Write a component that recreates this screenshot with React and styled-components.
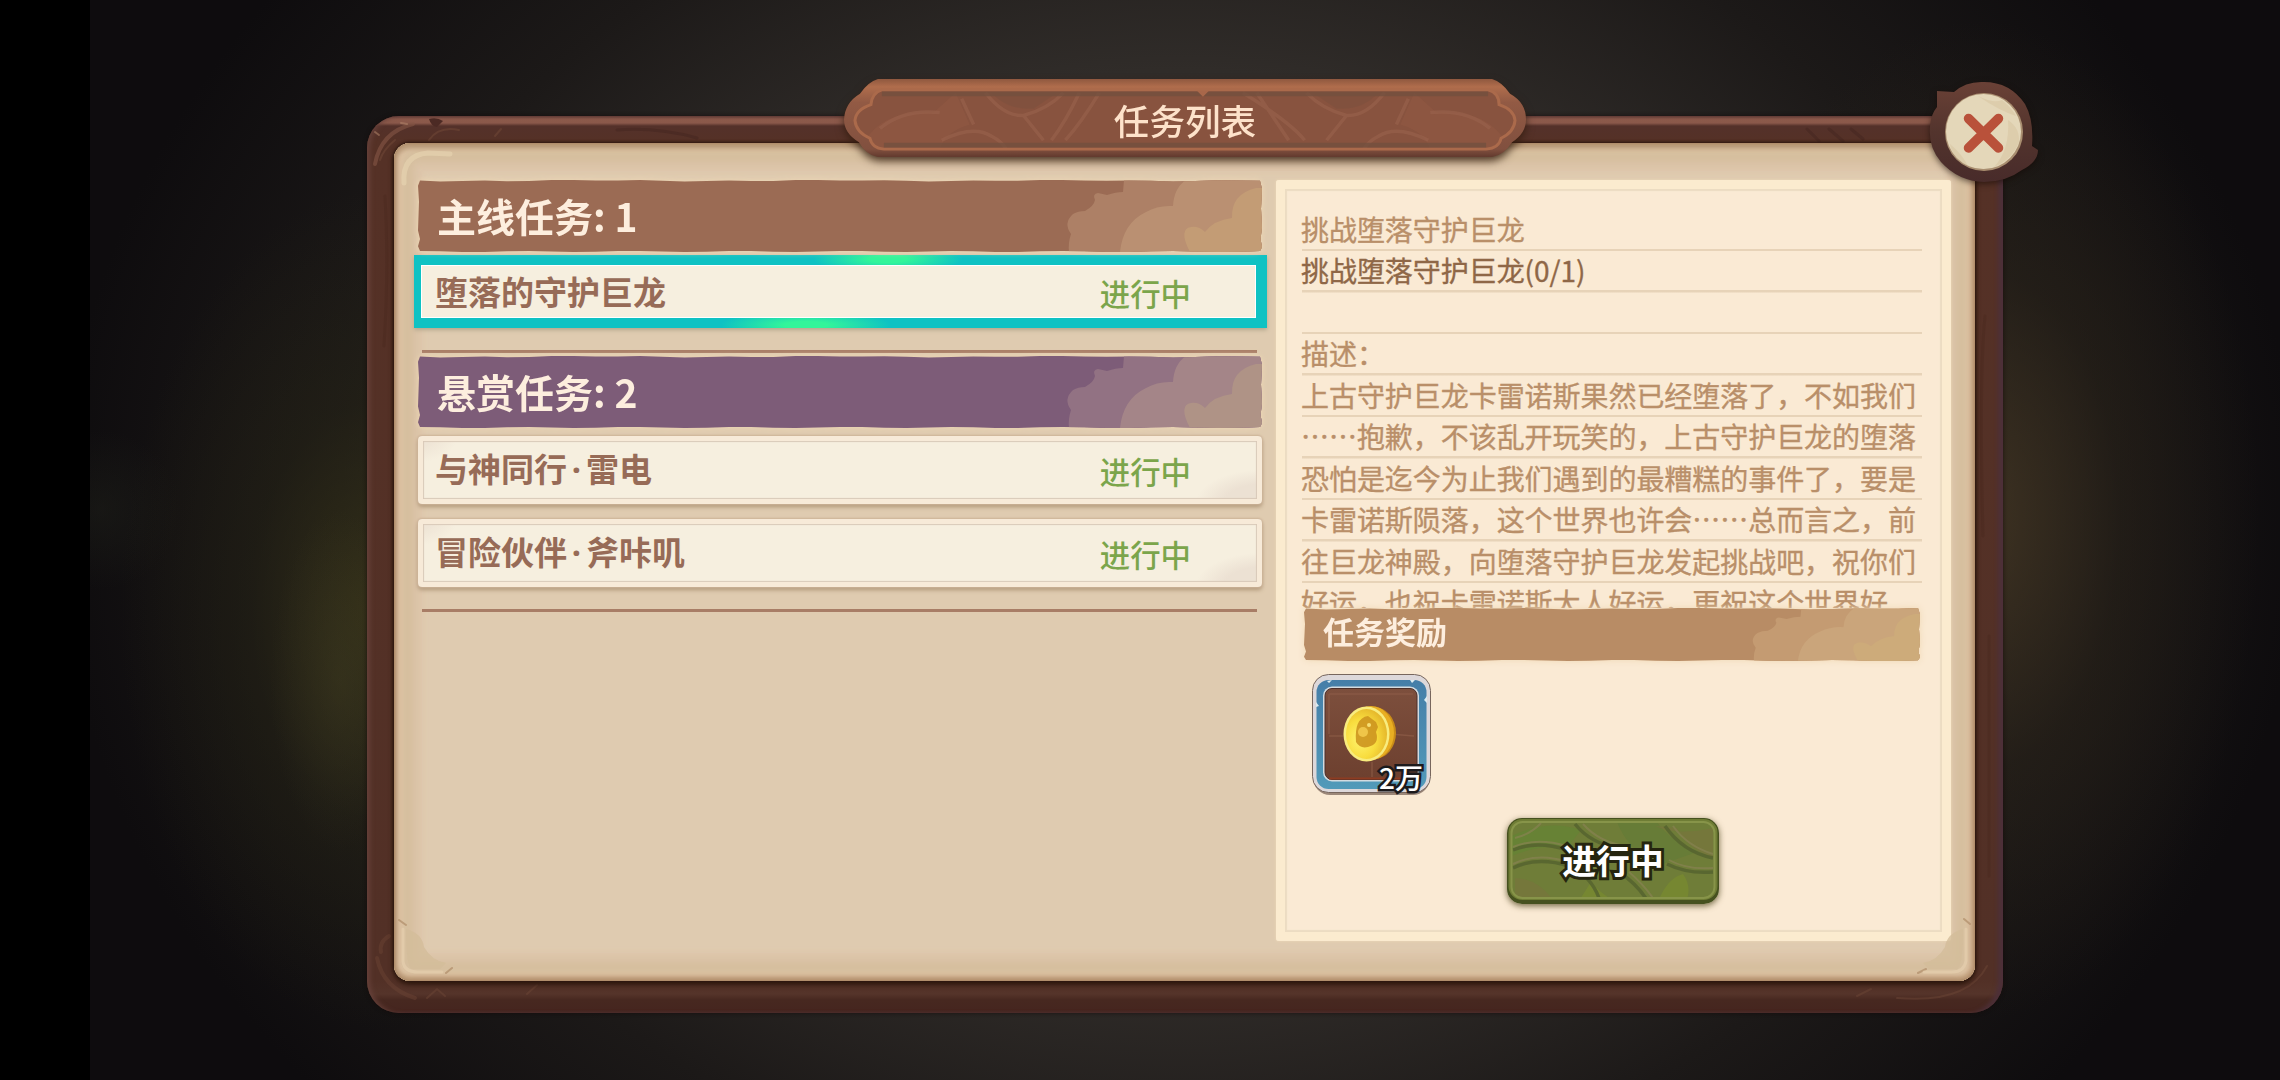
import React from 'react';
import styled, { createGlobalStyle, css } from 'styled-components'

const GlobalStyle = createGlobalStyle`
  * {
    box-sizing: border-box;
  }

  body {
    margin: 0;
    background: #000;
    overflow: hidden;
    font-family: "Noto Sans CJK SC", "Noto Sans", sans-serif;
  }
`

const Screen = styled.div`
  display: flex;
  width: 2280px;
  height: 1080px;
  background: #000;
`

const Notch = styled.div`
  flex: 0 0 90px;
  background: #000;
`

const Scene = styled.main`
  flex: 1;
  padding: 116px 0 0 277px;
  background:
    radial-gradient(ellipse 70px 170px at 250px 680px, rgba(74, 70, 38, .3), transparent),
    radial-gradient(ellipse 260px 420px at 290px 610px, rgba(58, 54, 24, .75), rgba(40, 38, 20, .4) 50%, transparent),
    radial-gradient(ellipse 80px 80px at 10px 510px, rgba(34, 36, 28, .4), transparent),
    radial-gradient(ellipse 280px 500px at 1890px 520px, rgba(70, 56, 36, .8), rgba(46, 38, 26, .45) 50%, transparent),
    radial-gradient(ellipse 1120px 900px at 1090px 520px, #3a3431 0%, #302c29 50%, #1c1918 75%, #0e0c0e 100%);
`

const Frame = styled.section`
  position: relative;
  width: 1636px;
  height: 897px;
  padding: 27px 28px 32px 27px;
  border-radius: 32px;
  background: linear-gradient(180deg, #6b4036 0, #8c5a4b 3px, #8a584a 7px, #54312a 10px, #553126 26px, #523026 864px, #55342a 878px, #472820 884px, #45251f 100%);
  box-shadow:
    inset 5px 0 5px -2px #66413a,
    inset -6px 0 4px -1px #4d3039,
    0 0 4px rgba(20, 10, 8, .7);
`

const Grain = styled.svg`
  position: absolute;
  inset: 0;
`

const Board = styled.div`
  position: relative;
  display: flex;
  gap: 14px;
  height: 838px;
  padding: 37px 23px 40px 24px;
  border-radius: 16px;
  background: #dfcbb0;
  box-shadow:
    0 0 3px 1px #2c170e,
    0 3px 5px 1px #321b10,
    inset 0 0 3px 1px #a98662,
    inset 4px 0 4px #c2a384,
    inset -5px 0 4px #c4a382,
    inset 0 -5px 4px #bd9c78,
    inset 0 6px 4px #b99c7b,
    inset 0 0 5px 8px #e0c5a6,
    inset 0 0 7px 20px #d6bf9f,
    inset 0 0 6px 28px #ddc5aa;
`

const QuestList = styled.div`
  display: flex;
  flex-direction: column;
  width: 844px;
`

const BannerBox = styled.header`
  display: grid;
  height: ${({ $height }) => $height}px;
  margin-top: ${({ $top }) => $top}px;
  flex: none;
  filter: drop-shadow(0 0 3px #f0d8b4);

  > * {
    grid-area: 1 / 1;
  }
`

const BannerText = styled.h2`
  margin: 0;
  padding-left: 19px;
  font-size: ${({ $size }) => $size}px;
  line-height: ${({ $line }) => $line}px;
  font-weight: 700;
  color: #fdeede;
  white-space: pre;
  z-index: 1;
`

const Divider = styled.hr`
  flex: none;
  width: 835px;
  height: 3px;
  margin: ${({ $top }) => $top}px 0 0 4px;
  border: 0;
  background: #a87d66;
`

const Card = styled.button`
  display: flex;
  flex: none;
  align-items: center;
  justify-content: space-between;
  width: 844px;
  height: 68px;
  margin: ${({ $top }) => $top}px 0 0;
  padding: 0 71px 0 17px;
  border: 0;
  border-radius: 4px;
  font-family: inherit;
  text-align: left;
  background:
    radial-gradient(ellipse 70px 36px at 100% 100%, #ece1d3 0 55%, transparent 95%),
    radial-gradient(ellipse 40px 26px at 0 0, #efe5d6 0 40%, transparent 100%),
    #f6efdf;
  box-shadow:
    inset 0 0 0 5px #f7ead8,
    inset 0 0 1px 6px #d9c9b8,
    0 0 2px 1px #cdb398,
    0 3px 4px #ae9678;

  ${({ $active }) => $active && css`
    width: 853px;
    height: 73px;
    margin-left: -4px;
    border-style: solid;
    border-width: 10px 11px 10px 7px;
    border-color: transparent;
    padding: 0 65px 0 14px;
    border-radius: 0;
    background:
      linear-gradient(#f6efdf, #f6efdf) padding-box,
      radial-gradient(ellipse 75px 14px at 474px 4px, #33f59a 0 25%, transparent 100%) border-box,
      radial-gradient(ellipse 85px 14px at 392px 70px, #33f59a 0 25%, transparent 100%) border-box,
      #0fc2c3 border-box;
    box-shadow: inset 0 0 0 1px #fff, 0 2px 4px #b3a78c;
  `}
`

const CardTitle = styled.span`
  padding-bottom: 2px;
  font-size: 33px;
  line-height: 48px;
  font-weight: 700;
  color: #976b57;
`

const Dot = styled.span`
  display: inline-block;
  width: 19px;
  font-family: "Noto Sans", sans-serif;
  text-align: center;
`

const CardStatus = styled.span`
  padding-top: 2px;
  font-size: 30.4px;
  line-height: 44px;
  font-weight: 500;
  color: #7ba54b;
`

const Paper = styled.article`
  display: flex;
  flex-direction: column;
  width: 675px;
  height: 761px;
  padding: 29.5px 29px 0 25px;
  border-radius: 3px;
  background: #faead4;
  box-shadow:
    inset 0 0 0 9px #fbebcf,
    inset 0 0 1px 11px #ecdcc2,
    0 0 3px #efd9b8;
`

const Notes = styled.div`
  height: 398.5px;
  overflow: hidden;
  flex: none;
`

const NoteLine = styled.p`
  height: 41.55px;
  margin: 0;
  background: linear-gradient(#e7d3b8, #e7d3b8) 1px 100% / 100% 2.5px no-repeat;
  font-size: 28px;
  line-height: 38px;
  letter-spacing: -.05px;
  white-space: nowrap;
  color: ${({ $strong }) => ($strong ? '#8f6747' : '#b98f69')};
  -webkit-text-stroke: .35px currentColor;
`

const RewardHead = styled.div`
  flex: none;
  width: 616px;
  margin-left: 3px;
`

const Slot = styled.div`
  position: relative;
  flex: none;
  width: 119px;
  height: 120px;
  margin: 13px 0 0 11px;
`

const Amount = styled.span`
  position: absolute;
  right: 8px;
  bottom: -2px;
  font-size: 28px;
  line-height: 38px;
  font-weight: 500;
  color: #fff;
  paint-order: stroke fill;
  -webkit-text-stroke: 5px #1c1a1c;
`

const ActionButton = styled.button`
  display: grid;
  align-self: center;
  width: 212px;
  height: 86px;
  margin: 24px 0 0 3px;
  padding: 0;
  border: 0;
  border-radius: 15px;
  background: none;
  font-family: inherit;
  box-shadow: 0 2px 6px rgba(70, 60, 20, .75);

  > * {
    grid-area: 1 / 1;
  }
`

const ActionLabel = styled.span`
  font-size: 33.8px;
  line-height: 84px;
  font-weight: 700;
  color: #fff;
  paint-order: stroke fill;
  -webkit-text-stroke: 6px #25250f;
  z-index: 1;
`

const Plaque = styled.div`
  position: absolute;
  top: -37px;
  left: 477px;
  display: grid;
  width: 682px;
  height: 79px;
  filter: drop-shadow(0 4px 4px rgba(50, 28, 14, .85));

  > * {
    grid-area: 1 / 1;
  }
`

const PlaqueText = styled.h1`
  margin: 0;
  font-size: 35.6px;
  line-height: 82px;
  font-weight: 500;
  text-align: center;
  color: #fde2ca;
  z-index: 1;
`

const Close = styled.button`
  position: absolute;
  top: -36px;
  left: 1561px;
  width: 112px;
  height: 106px;
  padding: 0;
  border: 0;
  background: none;
  filter: drop-shadow(0 2px 3px rgba(20, 8, 4, .6));
`

const clouds = {
  brown: ['#9b6b54', '#ad8066', '#ba9072', '#c39c75'],
  purple: ['#7d5c78', '#927283', '#a48588', '#af9386'],
  sand: ['#b88c65', '#c49b72', '#caa57b', '#cdab7a']
}

// ragged outline of a paper strip, w x h
const tornEdge = (w, h) => {
  const top = []
  const bottom = []
  const steps = Math.round(w / 22)
  for (let i = 0; i <= steps; i++) {
    const x = Math.min(w - 2, Math.max(2, (i / steps) * w))
    const dip = 0.6 + Math.sin(i * 1.7) * 0.5 + Math.sin(i * 0.6) * 0.5
    top.push(`${x.toFixed(1)},${Math.max(0, dip).toFixed(1)}`)
    bottom.unshift(`${x.toFixed(1)},${(h - Math.max(0, 0.5 + Math.cos(i * 1.3) * 0.6)).toFixed(1)}`)
  }
  return [
    ...top, `${w},${h * 0.12}`, `${w - 1},${h * 0.4}`, `${w},${h * 0.66}`, `${w - 1.5},${h * 0.82}`, `${w},${h * 0.93}`,
    ...bottom, `0,${h * 0.92}`, `2,${h * 0.82}`, `0,${h * 0.7}`, `1,${h * 0.3}`, `0,${h * 0.08}`
  ].join(' ')
}

const Banner = ({ tone, width = 844, height = 72, top = 0, cloudScale = 1, size = 39, line = 70, children }) => {
  const [base, far, mid, near] = clouds[tone]
  const id = `torn-${tone}`
  return (
    <BannerBox $height={height} $top={top}>
      <svg width={width} height={height} viewBox={`0 0 ${width} ${height}`}>
        <clipPath id={id}><polygon points={tornEdge(width, height)} /></clipPath>
        <g clipPath={`url(#${id})`}>
          <rect width={width} height={height} fill={base} />
          <g transform={`translate(${width} 0) scale(${cloudScale} ${height / 72})`}>
            <path fill={far} d="M-193 72 Q-194 63 -191 54 Q-199 43 -189 34 Q-184 31 -177 31 Q-168 26 -167 20 Q-170 14 -164 13 L-155 15 Q-146 12 -139 12 L-138 0 H0 V72Z" />
            <path fill={mid} d="M-142 72 Q-139 43 -116 32 Q-104 25 -89 26 Q-88 8 -76 0 H0 V72Z" />
            <path fill={near} d="M-72 72 Q-84 49 -71 47 Q-63 46 -57 52 Q-48 40 -30 38 Q-31 14 -6 8 L0 8 V72Z" />
          </g>
        </g>
      </svg>
      <BannerText $size={size} $line={line}>{children}</BannerText>
    </BannerBox>
  )
}

const QuestCard = ({ title, active, top }) => {
  const [name, detail] = title.split('·')
  return (
    <Card $active={active} $top={top}>
      <CardTitle>{name}{detail && <><Dot>·</Dot>{detail}</>}</CardTitle>
      <CardStatus>进行中</CardStatus>
    </Card>
  )
}

const FrameGrain = () => (
  <Grain width="1636" height="897" fill="none" strokeLinecap="round">
    <path d="M8 48 Q14 16 46 8" stroke="#855646" strokeWidth="4" opacity=".6" />
    <path d="M8 16 L12 19 M34 7 L40 8" stroke="#b98c70" strokeWidth="2" opacity=".5" />
    <path d="M62 3 Q70 1 76 5 L70 11 Q64 10 62 3Z" fill="#4c2a24" />
    <path d="M62 24 Q72 10 92 14 M128 20 l6 -7 M13 44 Q16 34 28 24" stroke="#6e4636" strokeWidth="2" opacity=".6" />
    <path d="M250 14 Q290 11 330 22 M1440 13 l12 12 M1462 13 l14 12 M1484 13 l12 10" stroke="#44261f" strokeWidth="3" opacity=".5" />
    <path d="M10 842 Q16 872 48 882 M14 836 Q12 826 22 820" stroke="#6c4535" strokeWidth="4" opacity=".45" />
    <path d="M60 882 l10 -9 l8 7 M160 878 l10 -9 M1490 880 l14 -7 M1530 882 Q1600 888 1620 850" stroke="#6c4535" strokeWidth="2" opacity=".5" />
    <path d="M18 80 Q22 150 17 230 M1618 200 Q1612 260 1616 420 M1622 520 V760" stroke="#48281f" strokeWidth="3" opacity=".4" />
  </Grain>
)

const BoardWear = () => (
  <Grain width="1581" height="838" fill="none" strokeLinecap="round">
    <path d="M10 40 Q8 12 34 10 L56 11" stroke="#e8d5b3" strokeWidth="5" opacity=".6" />
    <path d="M5 777 l7 5 M52 830 l6 -5 M1570 776 l6 5 M1524 830 l8 -4" stroke="#b4926f" strokeWidth="2" opacity=".8" />
    <path d="M12 786 Q28 790 30 804 Q38 818 52 820 L46 826 H18 Q12 824 12 786Z" fill="#d3bd9a" opacity=".8" />
    <path d="M1569 786 Q1553 790 1551 804 Q1543 818 1529 820 L1535 826 H1563 Q1569 824 1569 786Z" fill="#d3bd9a" opacity=".8" />
    <path d="M9 786 V818 Q10 829 24 829 H48" stroke="#e6cfae" strokeWidth="3" opacity=".7" />
    <path d="M1572 786 V818 Q1570 829 1558 829 H1530" stroke="#e6cfae" strokeWidth="3" opacity=".7" />
  </Grain>
)

const PlaqueArt = () => (
  <svg width="682" height="79" viewBox="0 0 684 80" preserveAspectRatio="none">
    <defs>
      <linearGradient id="plaqueRim" x1="0" y1="0" x2="0" y2="1">
        <stop offset="0" stopColor="#8f583f" />
        <stop offset=".1" stopColor="#b06d4c" />
        <stop offset=".3" stopColor="#925a44" />
        <stop offset=".9" stopColor="#81503f" />
        <stop offset="1" stopColor="#623a2e" />
      </linearGradient>
      <clipPath id="plaqueFace">
        <path d="M38 12 H646 Q656 15 656 26 Q671 31 672 42 Q671 54 658 60 Q656 69 644 70 H40 Q29 69 27 60 Q13 54 12 42 Q13 31 28 26 Q29 15 38 12Z" />
      </clipPath>
    </defs>
    <path fill="url(#plaqueRim)" d="M34 0 H650 Q660 3 668 15 Q684 24 684 41 Q684 55 670 64 Q662 77 650 79 H34 Q22 77 15 64 Q0 55 0 41 Q1 24 16 15 Q24 3 34 0Z" />
    <g clipPath="url(#plaqueFace)">
      <rect width="684" height="80" fill="#88533f" />
      <path d="M20 64 Q40 30 90 34 L112 14 L126 46 Q100 54 96 72 H20Z" fill="#915a43" opacity=".55" />
      <path d="M664 64 Q644 30 594 34 L572 14 L558 46 Q584 54 588 72 H664Z" fill="#915a43" opacity=".55" />
      <g fill="none" stroke="#99634d" strokeWidth="3.5" opacity=".6">
        <path d="M98 62 Q130 46 148 58 Q160 64 164 74 M142 14 Q160 38 180 37 Q205 30 220 14 M180 37 L200 62 M118 20 L130 46 M208 62 Q222 44 236 14 M222 62 Q238 44 256 14 M36 50 Q60 30 96 34" />
        <path d="M586 62 Q554 46 536 58 Q524 64 520 74 M542 14 Q524 38 504 37 Q479 30 464 14 M504 37 L484 62 M566 20 L554 46 M446 62 Q434 44 414 14 M462 62 Q448 44 400 14 M648 50 Q624 30 588 34" />
      </g>
      <path d="M148 14 Q164 32 190 30 L214 14Z M536 14 Q520 32 494 30 L470 14Z" fill="#79503f" opacity=".4" />
      <path d="M38 15 H646 M40 67 H644" stroke="#74503f" strokeWidth="5" opacity=".8" />
    </g>
    <path d="M38 11 H646 Q657 14 657 26 Q672 31 673 42 Q672 54 659 60 Q657 70 644 71 H40 Q28 70 26 60 Q12 54 11 42 Q12 31 27 26 Q28 14 38 11Z" fill="none" stroke="#ab6a4b" strokeWidth="3" />
    <path d="M354 12 l6 6 l6 -6Z" fill="#a8674a" />
  </svg>
)

const CloseArt = () => (
  <svg width="112" height="106" viewBox="0 0 112 106">
    <defs>
      <linearGradient id="closeWood" x1="0" y1="0" x2="0" y2="1">
        <stop offset="0" stopColor="#6a4136" />
        <stop offset=".5" stopColor="#53342d" />
        <stop offset="1" stopColor="#482b2a" />
      </linearGradient>
    </defs>
    <path fill="url(#closeWood)" d="M9 11 L26 12 Q38 1 56 2 Q82 2 97 24 Q106 40 104 66 L110 70 Q110 82 94 90 Q78 102 56 102 Q30 101 13 82 Q0 67 2 46 Q3 34 9 27Z" />
    <circle cx="56" cy="52" r="39" fill="#a98e70" />
    <circle cx="55.5" cy="51.5" r="37.5" fill="#e4d7b9" />
    <path d="M22 64 Q34 74 40 86 Q24 78 22 64Z M80 40 Q92 48 91 62 Q84 80 66 87 Q82 70 80 40Z M50 16 Q66 24 74 20 Q84 28 88 36 Q70 30 50 16Z" fill="#d8c6a3" opacity=".6" />
    <path d="M40.5 38.500 L70.500 68 M70.500 38.500 L40.500 68" stroke="#b9513a" strokeWidth="9.5" strokeLinecap="round" />
  </svg>
)

const SlotArt = () => (
  <svg width="123" height="128" viewBox="0 0 123 128">
    <defs>
      <linearGradient id="slotBlue" x1="0" y1="0" x2="0" y2="1">
        <stop offset="0" stopColor="#457ea8" />
        <stop offset="1" stopColor="#529ab9" />
      </linearGradient>
      <linearGradient id="slotWood" x1="0" y1="0" x2="0" y2="1">
        <stop offset="0" stopColor="#7d4f3d" />
        <stop offset="1" stopColor="#6d402f" />
      </linearGradient>
      <radialGradient id="gold" cx=".35" cy=".6" r=".65">
        <stop offset="0" stopColor="#fff46f" />
        <stop offset=".6" stopColor="#f8dc3d" />
        <stop offset="1" stopColor="#e6b92c" />
      </radialGradient>
    </defs>
    <rect x="1" y="3" width="117" height="118" rx="17" fill="#6a5348" opacity=".65" />
    <rect x=".5" y=".5" width="118" height="118" rx="16" fill="#ddd8da" stroke="#77665d" />
    <rect x="4.5" y="6" width="110" height="109" rx="12" fill="url(#slotBlue)" />
    <rect x="11" y="12.5" width="96" height="95" rx="9" fill="#d3dbe0" />
    <rect x="13" y="14.5" width="92" height="91" rx="7" fill="url(#slotWood)" stroke="#4c2f2a" />
    <path d="M17 20 H101 M17 62 H48 M78 60 L102 62 M60 88 V103 M17 20 V60" stroke="#91614b" strokeWidth="1.5" opacity=".6" fill="none" />
    <path d="M17 104.5 H101" stroke="#8d3c22" strokeWidth="2" />
    <path d="M4 28 l3 4 l-3 1Z M115 22 l-3 4 l3 3Z M20 6 l-3 3 l-2 -2Z M98 6 l2 3 l3 -3Z" fill="#dcebf0" />
    <ellipse cx="62" cy="59" rx="22" ry="26" fill="#c98c18" />
    <ellipse cx="59" cy="59" rx="23" ry="27" fill="#e8ae22" />
    <ellipse cx="54.5" cy="60" rx="23" ry="27.5" fill="#f8ec7e" />
    <ellipse cx="54.5" cy="60" rx="20.5" ry="25" fill="url(#gold)" />
    <path d="M44 68 Q42 44 56 42 L64 48 L66 53 L64 58 Q68 70 56 73 Q48 75 44 68Z" fill="#cd951f" opacity=".9" />
    <circle cx="51" cy="58" r="5" fill="#efc549" />
    <circle cx="57" cy="51" r="2" fill="#f7df75" />
  </svg>
)

const ActionArt = () => (
  <svg width="212" height="86" viewBox="0 0 212 86">
    <defs>
      <clipPath id="mossFace"><rect x="4" y="4" width="204" height="76" rx="11" /></clipPath>
    </defs>
    <rect width="212" height="86" rx="15" fill="#46511f" />
    <rect x="1.5" y="1" width="209" height="81" rx="14" fill="#6f7d35" />
    <g clipPath="url(#mossFace)">
      <rect width="212" height="86" fill="#6f7d38" />
      <path d="M0 20 Q40 0 74 12 L60 30 Q30 26 0 40Z" fill="#678235" />
      <path d="M110 4 H150 Q160 20 190 34 L150 48 Q120 30 110 4Z" fill="#677c37" />
      <path d="M150 86 Q160 60 176 56 Q186 70 178 86Z M84 64 Q96 78 112 86 H70Z" fill="#788a2f" opacity=".8" />
      <path d="M8 60 Q30 60 48 84 H8Z M148 8 Q170 18 206 10 V40 Q180 30 170 10Z" fill="#77753d" opacity=".7" />
      <g fill="none" stroke="#56632f" strokeWidth="3.5" opacity=".85">
        <path d="M6 32 Q30 22 60 32 M6 50 Q30 38 62 48 Q84 58 92 80 M68 6 Q84 26 112 30 M112 54 Q130 66 140 82 M158 8 Q176 34 206 40 M160 46 Q180 56 206 54" />
      </g>
      <g fill="none" stroke="#868250" strokeWidth="2" opacity=".75">
        <path d="M6 29 Q30 19 60 28 M6 46 Q30 34 62 44 M76 6 Q92 24 118 28 M166 8 Q180 28 206 36 M162 42 Q180 52 206 50 M122 54 Q136 66 146 80 M8 20 Q24 16 34 5" />
      </g>
    </g>
    <rect x="4.5" y="4" width="203" height="76" rx="11" fill="none" stroke="#879449" strokeWidth="2" />
  </svg>
)

const notes = [
  { text: '挑战堕落守护巨龙' },
  { text: '挑战堕落守护巨龙(0/1)', strong: true },
  { text: '' },
  { text: '描述：' },
  { text: '上古守护巨龙卡雷诺斯果然已经堕落了，不如我们' },
  { text: '……抱歉，不该乱开玩笑的，上古守护巨龙的堕落' },
  { text: '恐怕是迄今为止我们遇到的最糟糕的事件了，要是' },
  { text: '卡雷诺斯陨落，这个世界也许会……总而言之，前' },
  { text: '往巨龙神殿，向堕落守护巨龙发起挑战吧，祝你们' },
  { text: '好运，也祝卡雷诺斯大人好运，更祝这个世界好' }
]

const App = () => {
  return (
    <Screen lang="zh-CN">
      <GlobalStyle />
      <Notch />
      <Scene>
        <Frame>
          <FrameGrain />
          <Board>
            <BoardWear />
            <QuestList>
              <Banner tone="brown">主线任务: 1</Banner>
              <QuestCard title="堕落的守护巨龙" active top={3} />
              <Divider $top={22} />
              <Banner tone="purple" top={3}>悬赏任务: 2</Banner>
              <QuestCard title="与神同行·雷电" top={8} />
              <QuestCard title="冒险伙伴·斧咔叽" top={15} />
              <Divider $top={22} />
            </QuestList>
            <Paper>
              <Notes>
                {notes.map(({ text, strong }, i) => (
                  <NoteLine key={i} $strong={strong}>{text}</NoteLine>
                ))}
              </Notes>
              <RewardHead>
                <Banner tone="sand" width={616} height={53} cloudScale={0.86} size={31} line={46}>任务奖励</Banner>
              </RewardHead>
              <Slot>
                <SlotArt />
                <Amount>2万</Amount>
              </Slot>
              <ActionButton>
                <ActionArt />
                <ActionLabel>进行中</ActionLabel>
              </ActionButton>
            </Paper>
          </Board>
          <Plaque>
            <PlaqueArt />
            <PlaqueText>任务列表</PlaqueText>
          </Plaque>
          <Close aria-label="close">
            <CloseArt />
          </Close>
        </Frame>
      </Scene>
    </Screen>
  )
}

export default App;
